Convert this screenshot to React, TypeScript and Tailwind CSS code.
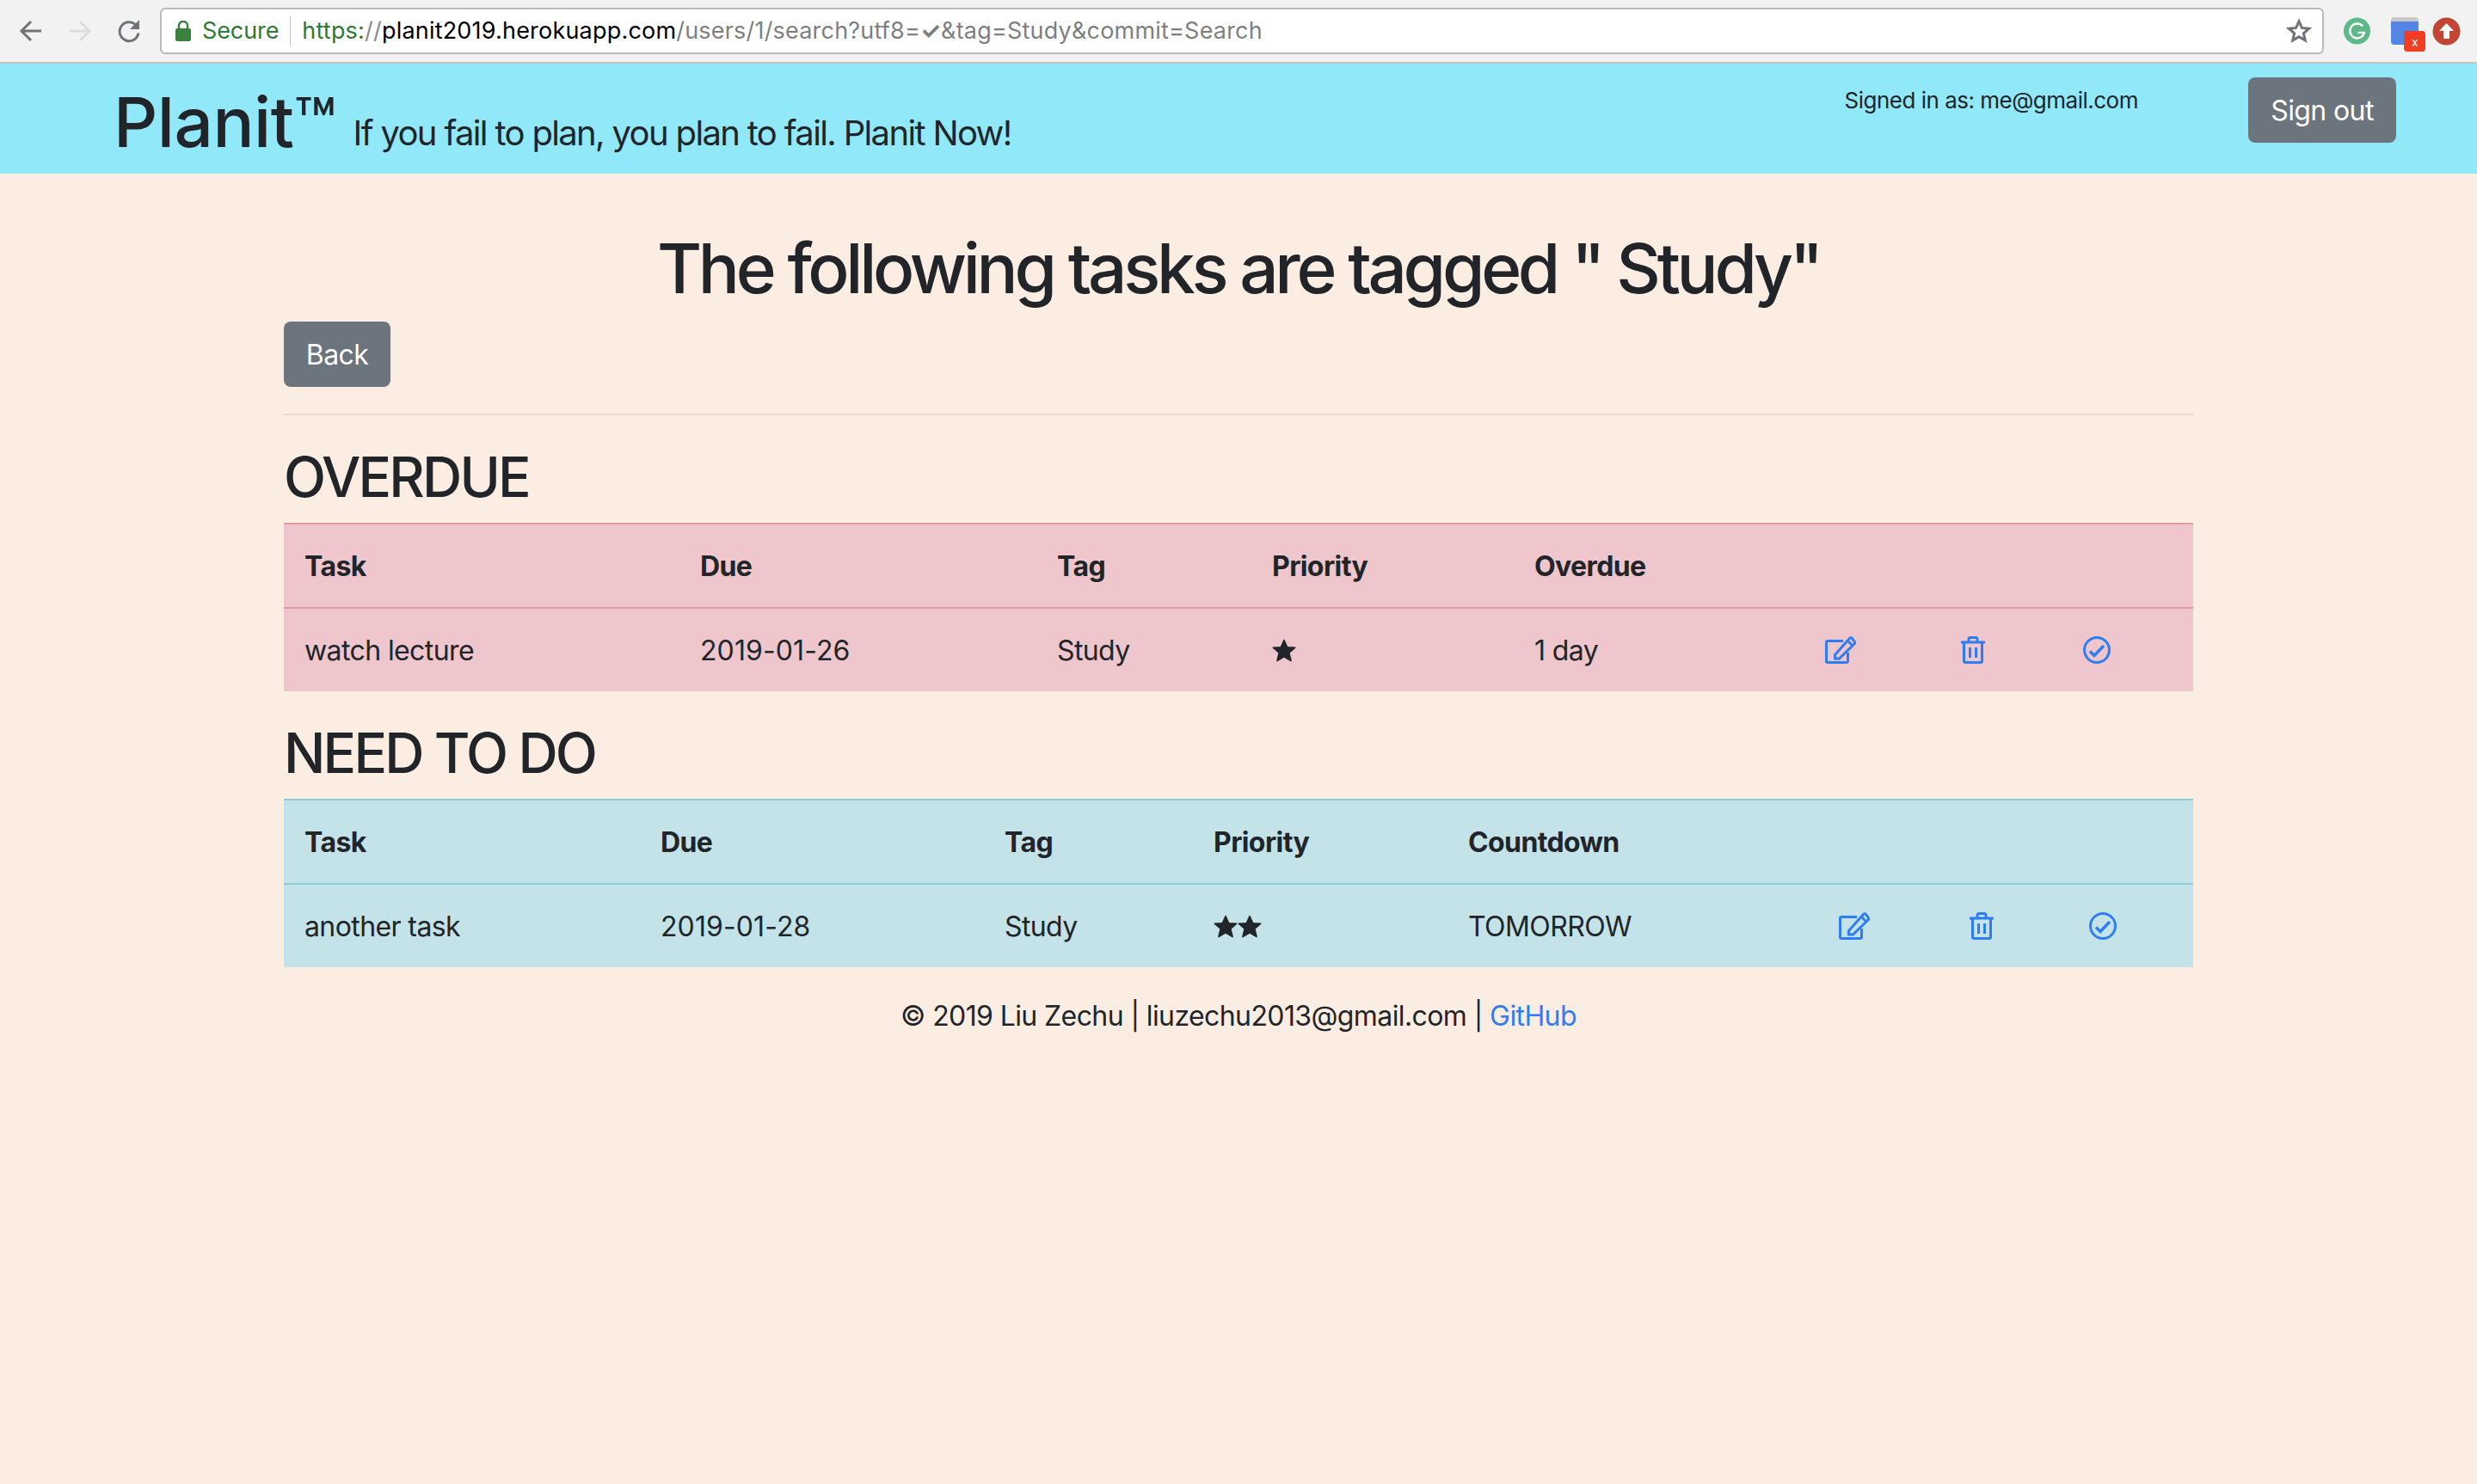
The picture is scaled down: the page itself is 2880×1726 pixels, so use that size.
function EditIcon() {
  return (
    <svg width="36" height="32" viewBox="0 0 36 32" fill="none" stroke="#2f7df6" strokeWidth="3" className="block">
      <path d="M21 5.500H3a1.500 1.500 0 0 0-1.500 1.500V29a1.500 1.500 0 0 0 1.500 1.500h22a1.500 1.500 0 0 0 1.500-1.500V19" />
      <path d="M11.500 21.500v4.500h5L34 9a2 2 0 0 0 0-3l-2.500-3.500a2 2 0 0 0-3 0z" />
      <path d="M27 6l4.500 4.500" />
    </svg>
  );
}

function TrashIcon() {
  return (
    <svg width="28" height="32" viewBox="0 0 28 32" fill="none" stroke="#2f7df6" strokeWidth="3" className="block">
      <path d="M0 7h28" />
      <path d="M9 6V3.500A2 2 0 0 1 11 1.500h6a2 2 0 0 1 2 2V6" />
      <path d="M3.500 7v22a1.500 1.500 0 0 0 1.500 1.500h18a1.500 1.500 0 0 0 1.500-1.500V7" />
      <path d="M10.500 13v12M17.500 13v12" />
    </svg>
  );
}

function CheckIcon() {
  return (
    <svg width="32" height="32" viewBox="0 0 32 32" fill="none" stroke="#2f7df6" strokeWidth="3" className="block">
      <circle cx="16" cy="16" r="14.500" />
      <path d="M8 17.500l5 5L24 11" strokeWidth="3.500" />
    </svg>
  );
}

function Star() {
  return (
    <svg width="28" height="27" viewBox="0 0 28 27" className="block" fill="#212529" stroke="#212529" strokeWidth="1.500" strokeLinejoin="round">
      <path d="M14 1.500l3.800 8.200 9 .6-6.900 6 2.200 9.200L14 20.800l-8.100 4.700 2.200-9.200-6.900-6 9-.6z" />
    </svg>
  );
}

interface TaskTableProps {
  widths: number[];
  tone: 'danger' | 'info';
  lastHeader: string;
  task: string;
  due: string;
  stars: number;
  last: string;
}

function TaskTable({ widths, tone, lastHeader, task, due, stars, last }: TaskTableProps) {
  const isDanger = tone === 'danger';
  const line = isDanger ? 'border-[#e19ca3]' : 'border-[#8dcbd7]';
  const cell = `px-6 border-t-2 text-left align-middle ${line}`;
  return (
    <table className={`w-full table-fixed border-collapse ${isDanger ? 'bg-[#eec6cb]' : 'bg-[#c3e3e9]'}`}>
      <colgroup>
        {widths.map((w, i) => (
          <col key={i} style={{ width: w }} />
        ))}
      </colgroup>
      <thead>
        <tr className="h-[98px]">
          <th className={`${cell} font-bold pt-[2px]`}>Task</th>
          <th className={`${cell} font-bold pt-[2px]`}>Due</th>
          <th className={`${cell} font-bold pt-[2px]`}>Tag</th>
          <th className={`${cell} font-bold pt-[2px]`}>Priority</th>
          <th className={`${cell} font-bold pt-[2px]`}>{lastHeader}</th>
          <th className={cell}></th>
          <th className={cell}></th>
          <th className={cell}></th>
        </tr>
      </thead>
      <tbody>
        <tr className="h-[97px]">
          <td className={`${cell} pt-[2px]`}>{task}</td>
          <td className={`${cell} pt-[2px] tracking-[0.1px]`}>{due}</td>
          <td className={`${cell} pt-[2px]`}>Study</td>
          <td className={cell}>
            <div className="flex">
              {Array.from({ length: stars }).map((_, i) => (
                <Star key={i} />
              ))}
            </div>
          </td>
          <td className={`${cell} pt-[2px]`}>{last}</td>
          <td className={cell}><EditIcon /></td>
          <td className={cell}><TrashIcon /></td>
          <td className={cell}><CheckIcon /></td>
        </tr>
      </tbody>
    </table>
  );
}

function BrowserBar() {
  return (
    <div className="h-[74px] bg-[#f2f2f2] border-b-2 border-[#c4c4c4] flex items-center font-['Inter',sans-serif]">
      <div className="w-[186px] flex items-center shrink-0 pl-[22px] gap-[29px]">
        <svg width="28" height="28" viewBox="0 0 28 28" fill="none" stroke="#6f7378" strokeWidth="3"><path d="M26 14H3M14 3 3 14l11 11" /></svg>
        <svg width="28" height="28" viewBox="0 0 28 28" fill="none" stroke="#dcdcdc" strokeWidth="3"><path d="M2 14h23M14 3l11 11-11 11" /></svg>
        <svg width="28" height="30" viewBox="0 0 28 30" fill="none" stroke="#6f7378" strokeWidth="3"><path d="M25 17.500a11 11 0 1 1-3.500-10" /><path d="M26 2v11H15z" fill="#6f7378" stroke="none" /></svg>
      </div>
      <div className="w-[2516px] h-[54px] bg-white border-2 border-[#b9b9b9] rounded-md flex items-center text-[27px] pl-[16px] pr-[12px] whitespace-nowrap">
        <svg width="18" height="24" viewBox="0 0 18 24" className="mr-[13px] shrink-0">
          <rect x="0" y="9" width="18" height="15" rx="2" fill="#3b8240" />
          <path d="M4 10V6a5 5 0 0 1 10 0v4" fill="none" stroke="#3b8240" strokeWidth="2.500" />
        </svg>
        <span className="text-[#2d7a33] tracking-[-0.1px]">Secure</span>
        <span className="w-px h-[34px] bg-[#c4c4c4] mx-[13px]"></span>
        <span className="text-[#2d7a33] tracking-[0.2px]">https:</span>
        <span className="text-[#8a8a8a] tracking-[0.2px]">//</span>
        <span className="text-black tracking-[0.2px]">planit2019.herokuapp.com</span>
        <span className="text-[#7f7f7f] tracking-[0.2px]">/users/1/search?utf8=<b className="font-bold">✓</b>&amp;tag=Study&amp;commit=Search</span>
        <svg width="30" height="30" viewBox="0 0 24 24" fill="none" stroke="#6f7378" strokeWidth="2.400" className="ml-auto">
          <path d="m12 3 2.700 6.100 6.600.7-5 4.400 1.500 6.500L12 17.300 6.200 20.700l1.500-6.500-5-4.400 6.600-.7z" />
        </svg>
      </div>
      <div className="flex-1 flex items-center pl-[22px]">
        <svg width="33" height="32" viewBox="0 0 34 34">
          <circle cx="17" cy="17" r="16.500" fill="#5cba8a" />
          <path d="M24 11a9 9 0 1 0 2 8h-8" fill="none" stroke="#fff" strokeWidth="2.500" />
        </svg>
        <div className="relative w-[32px] h-[32px] ml-[23px]">
          <div className="w-[32px] h-[32px] bg-[#5286e2] rounded-sm border-t-[5px] border-[#c9c9c9]"></div>
          <div className="absolute left-[15px] top-[16px] w-[25px] h-[24px] bg-[#f13e22] rounded-sm text-white text-[14px] leading-[26px] text-center">x</div>
        </div>
        <svg width="33" height="33" viewBox="0 0 33 33" className="ml-[16px]">
          <circle cx="16.500" cy="16.500" r="16" fill="#c24433" />
          <path d="M16.500 7 25 16h-5v9h-7v-9H8z" fill="#fff" />
        </svg>
      </div>
    </div>
  );
}

export default function App() {
  return (
    <div className="min-h-[1726px] bg-[#fcede2] text-[#212529] font-['Inter',sans-serif] text-[32px] leading-[48px] tracking-[-0.6px]">
      <BrowserBar />

      <div className="h-[128px] bg-[#90e8f9] flex items-start pl-[132px] pr-[94px]">
        <span className="text-[80px] leading-[96px] mt-[20px] tracking-[-0.5px] font-medium">Planit™</span>
        <span className="text-[40px] leading-[48px] mt-[57px] ml-[20px] tracking-[-1.65px]">If you fail to plan, you plan to fail. Planit Now!</span>
        <span className="ml-auto text-[26px] leading-[36px] mt-[25px] tracking-[-0.5px]">Signed in as: me@gmail.com</span>
        <button className="ml-[128px] mt-[16px] h-[76px] w-[172px] bg-[#6c757d] text-white rounded-lg pt-[2px]">Sign out</button>
      </div>

      <main className="w-[2220px] mx-auto">
        <h1 className="text-[80px] leading-[96px] text-center pt-[62px] mb-[14px] tracking-[-4.3px] font-medium">
          The following tasks are tagged &quot; Study&quot;
        </h1>
        <button className="h-[76px] w-[124px] bg-[#6c757d] text-white rounded-lg block pt-[2px]">Back</button>
        <hr className="border-0 border-t-2 border-[#e6dcd1] mt-[31px] mb-[32px]" />

        <h2 className="text-[64px] leading-[75px] pt-[2px] mb-[16px] tracking-[-2.8px] font-medium">OVERDUE</h2>
        <TaskTable
          widths={[460, 415, 250, 305, 338, 158, 142, 152]}
          tone="danger"
          lastHeader="Overdue"
          task="watch lecture"
          due="2019-01-26"
          stars={1}
          last="1 day"
        />

        <h2 className="text-[64px] leading-[75px] pt-[2px] mb-[16px] mt-[32px] tracking-[-2.8px] font-medium">NEED TO DO</h2>
        <TaskTable
          widths={[414, 400, 243, 296, 431, 152, 139, 145]}
          tone="info"
          lastHeader="Countdown"
          task="another task"
          due="2019-01-28"
          stars={2}
          last="TOMORROW"
        />

        <p className="text-center mt-[33px]">
          © 2019 Liu Zechu | liuzechu2013@gmail.com | <a className="text-[#2f7df6]">GitHub</a>
        </p>
      </main>
    </div>
  );
}
